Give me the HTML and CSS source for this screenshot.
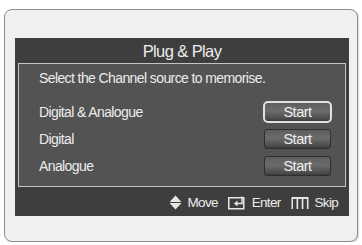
FILE: index.html
```html
<!DOCTYPE html>
<html lang="en">
<head>
  <meta charset="UTF-8">
  <meta name="viewport" content="width=device-width, initial-scale=1.0">
  <title>Plug &amp; Play</title>
  <link rel="stylesheet" href="styles.css">
</head>
<body>
  <!-- Outer light frame -->
  <div class="osd-frame">
    <div class="osd-panel">
      <div class="osd-title">Plug &amp; Play</div>

      <!-- Channel source box -->
      <div class="osd-box">
        <div class="osd-desc">Select the Channel source to memorise.</div>
        <div class="osd-row">
          <span>Digital &amp; Analogue</span>
          <button class="osd-btn focused">Start</button>
        </div>
        <div class="osd-row">
          <span>Digital</span>
          <button class="osd-btn">Start</button>
        </div>
        <div class="osd-row">
          <span>Analogue</span>
          <button class="osd-btn">Start</button>
        </div>
      </div>

      <!-- Key help -->
      <div class="osd-help">
        <span class="help-item">
          <svg width="13" height="15" viewBox="0 0 13 15">
            <polygon points="6.5,0.5 12.5,7 0.5,7" fill="#e6e6e6"/>
            <polygon points="0.5,8 12.5,8 6.5,14.5" fill="#e6e6e6"/>
          </svg>
          Move
        </span>
        <span class="help-item">
          <svg width="18" height="14" viewBox="0 0 18 14">
            <rect x="0.75" y="1.75" width="15" height="11" fill="none" stroke="#e6e6e6" stroke-width="1.5"/>
            <path d="M14 0.5 V7.5 H8" fill="none" stroke="#e6e6e6" stroke-width="1.5"/>
            <polygon points="6,7.5 9.5,4.5 9.5,10.5" fill="#e6e6e6"/>
          </svg>
          Enter
        </span>
        <span class="help-item">
          <svg width="18" height="14" viewBox="0 0 18 14">
            <rect x="0.5" y="1" width="17" height="12" fill="#e6e6e6"/>
            <rect x="2" y="3" width="3.5" height="10" fill="#3d3d3d"/>
            <rect x="7.2" y="3" width="3.5" height="10" fill="#3d3d3d"/>
            <rect x="12.4" y="3" width="3.5" height="10" fill="#3d3d3d"/>
          </svg>
          Skip
        </span>
      </div>
    </div>
  </div>
</body>
</html>
```

FILE: styles.css
```css
/* Page */
body {
  margin: 0;
  background: #ffffff;
  font-family: "Liberation Sans", Arial, sans-serif;
}

/* Outer rounded frame */
.osd-frame {
  margin: 9px 4px 0 4px;
  height: 233px;
  padding: 28px 8px 0 10px;
  box-sizing: border-box;
  background: #eff0f2;
  border: 1px solid #8e8e8e;
  border-radius: 8px;
  box-shadow: 1px 1px 1px rgba(0, 0, 0, 0.15);
}

/* Dark OSD panel */
.osd-panel {
  background: #3e3e3e;
  height: 178px;
  padding: 0 3px;
  box-sizing: border-box;
  display: flex;
  flex-direction: column;
  color: #ececec;
}

.osd-title {
  height: 25px;
  line-height: 27px;
  text-align: center;
  font-size: 16.5px;
  letter-spacing: -0.6px;
}

/* Inner box */
.osd-box {
  border: 1px solid #c4c4c4;
  background: #535353;
  height: 124px;
  box-sizing: border-box;
  padding: 0 14px 0 20px;
  font-size: 14px;
  letter-spacing: -0.6px;
}

.osd-desc {
  height: 28px;
  line-height: 28px;
  margin-bottom: 6px;
}

.osd-row {
  height: 27px;
  display: flex;
  align-items: center;
  justify-content: space-between;
}

/* Start buttons */
.osd-btn {
  width: 67px;
  height: 20px;
  padding: 0;
  font-family: inherit;
  font-size: 14.5px;
  line-height: 18px;
  letter-spacing: -0.5px;
  color: #f0f0f0;
  border: 1px solid #2f2f2f;
  border-radius: 3px;
  background: linear-gradient(#5e5e5e, #6c6c6c 45%, #4a4a4a 90%, #3a3a3a);
}

.osd-btn.focused {
  width: 69px;
  height: 22px;
  border: 2px solid #e2e2e2;
  border-radius: 5px;
  margin-right: -1px;
}

/* Key help line */
.osd-help {
  flex: 1;
  display: flex;
  justify-content: flex-end;
  align-items: center;
  gap: 10px;
  padding: 2px 8px 0 0;
  font-size: 13.5px;
  letter-spacing: -0.7px;
}

.help-item {
  display: flex;
  align-items: center;
  gap: 6px;
}
```
